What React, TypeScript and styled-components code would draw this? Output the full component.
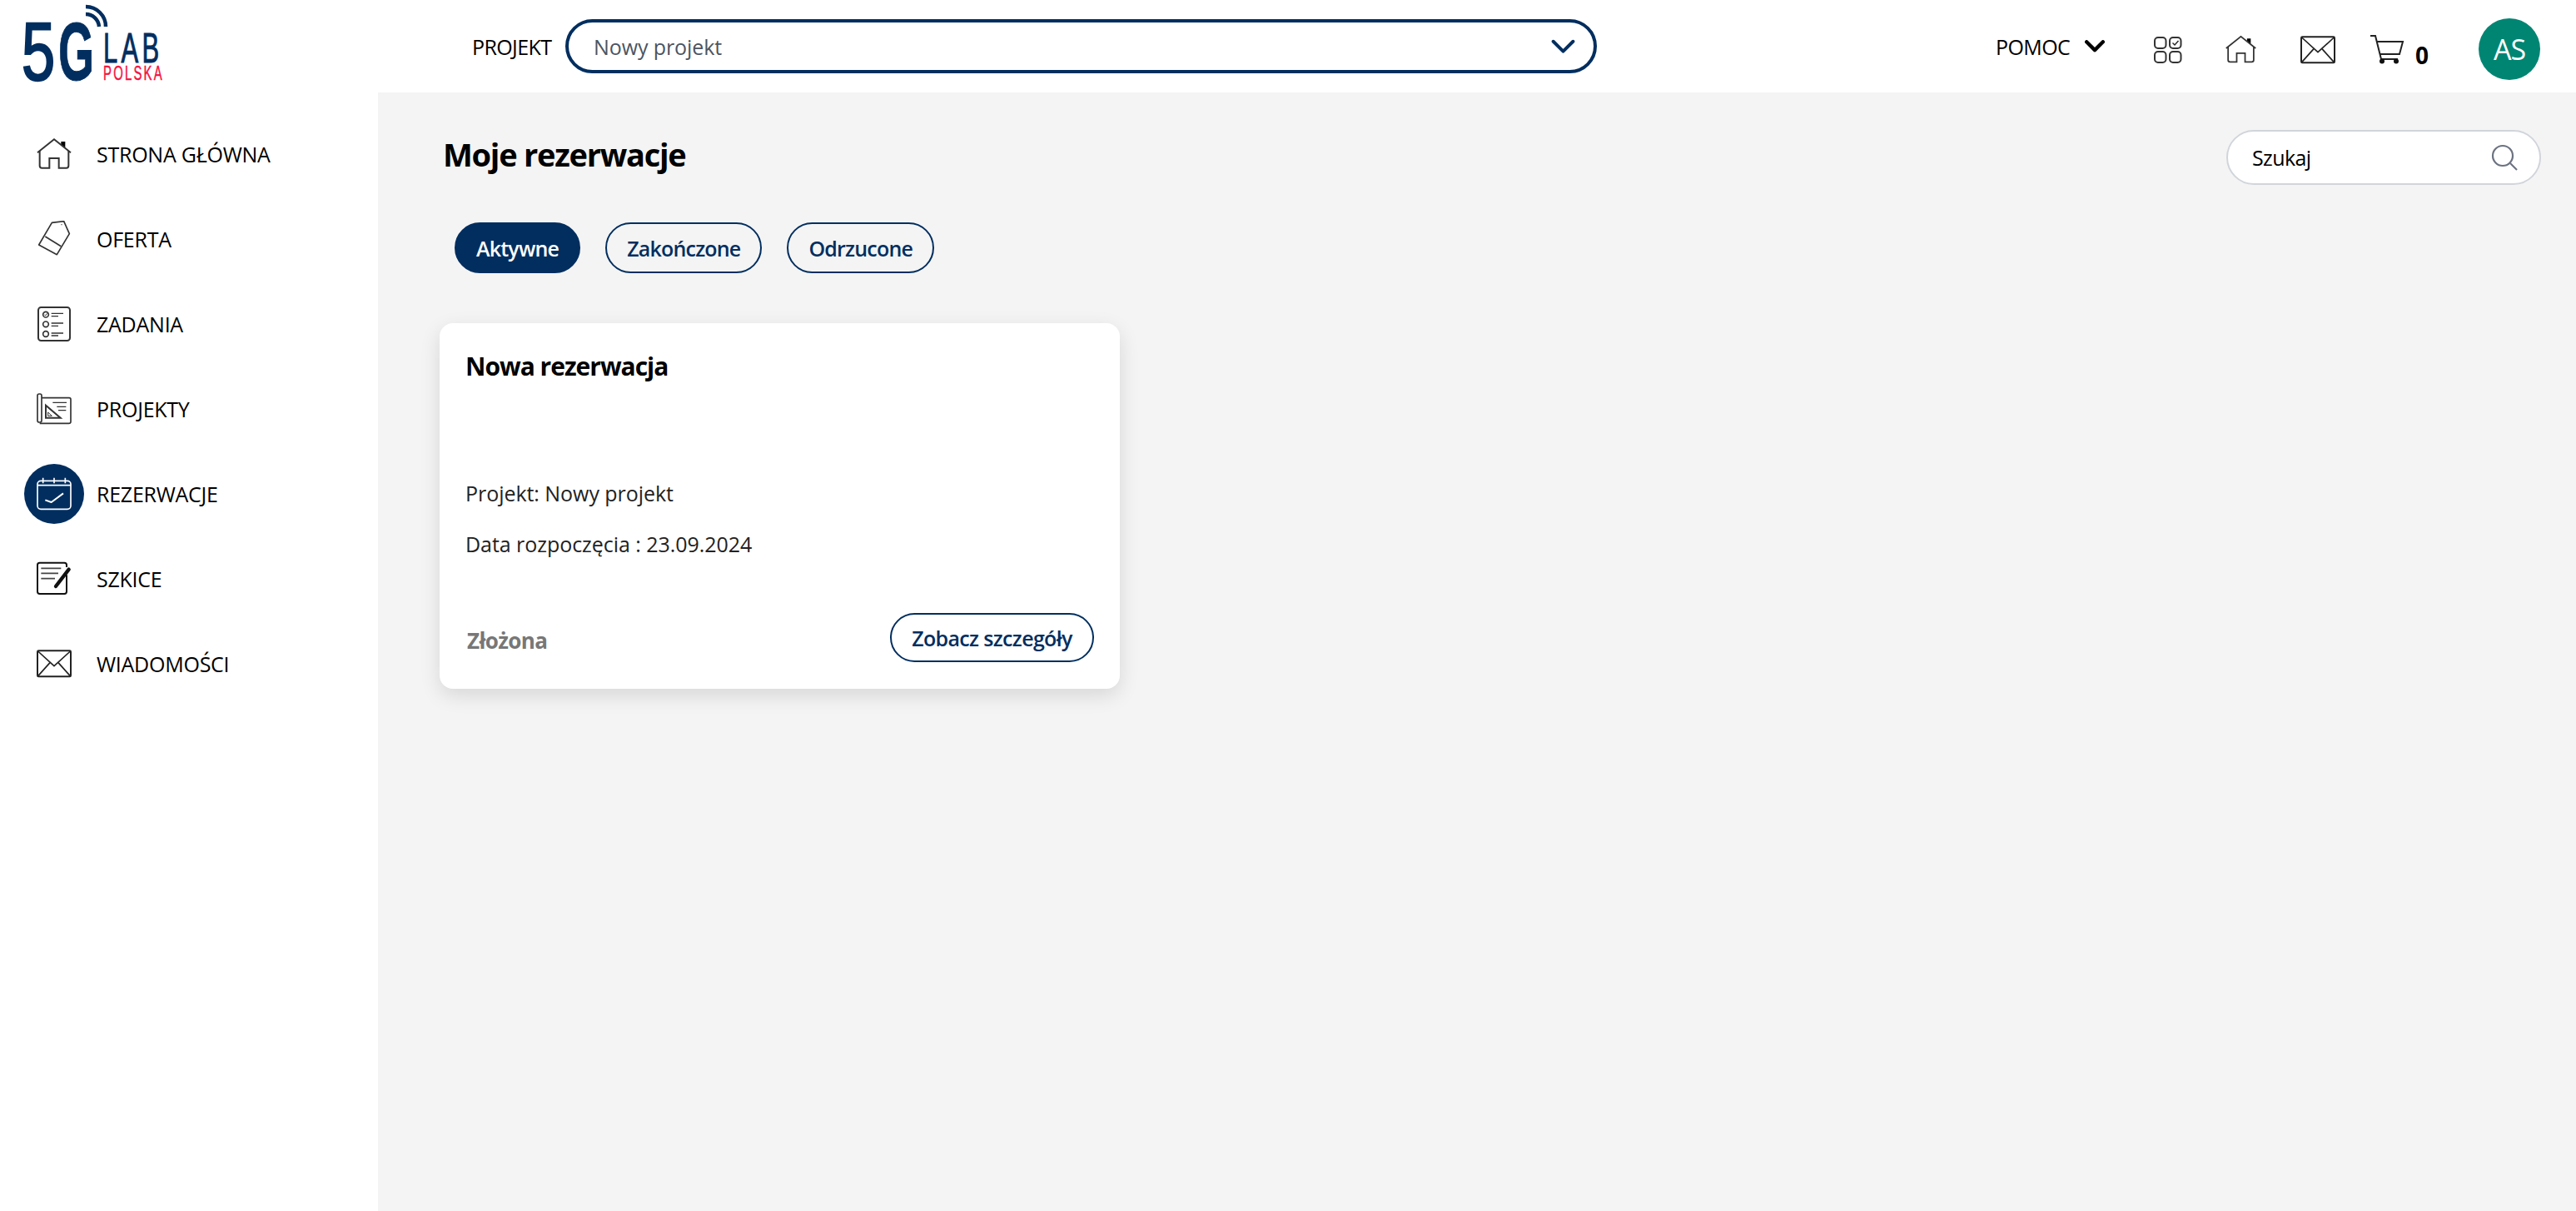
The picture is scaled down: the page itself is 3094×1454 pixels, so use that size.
import styled, { createGlobalStyle } from "styled-components";

const NAVY = "#012e5f";

const GlobalStyle = createGlobalStyle`
  html, body {
    margin: 0;
    padding: 0;
    background: #f4f4f4;
  }
  body {
    font-family: "Open Sans", "Noto Sans", sans-serif;
    color: #000;
  }
  * {
    box-sizing: border-box;
  }
`;

type IconProps = { size?: number; color?: string };

const HomeIcon = ({ size = 44, color = "#333" }: IconProps) => (
  <svg width={size} height={size} viewBox="-66 -66 132 132" fill="none" stroke={color} strokeWidth="6">
    <path d="M-60 -5 L0 -53 L60 -5" />
    <path d="M-52 -12 V42 a8 8 0 0 0 8 8 H-17 V15 H17 V50 H44 a8 8 0 0 0 8 -8 V-12" />
    <path d="M25 -45 H40 V-24 L25 -36 Z" fill="#000" stroke="none" />
  </svg>
);

const TagIcon = ({ size = 44, color = "#333" }: IconProps) => (
  <svg width={size} height={size} viewBox="-66 -66 132 132" fill="none" stroke={color} strokeWidth="5">
    <path d="M-8 -59 L35 -64 L55 -19 L10 56 L-55 21 Z" strokeLinejoin="round" />
    <path d="M-32 -9 L25 26" />
    <circle cx="27" cy="-52" r="2" fill={color} stroke="none" />
  </svg>
);

const TasksIcon = ({ size = 44, color = "#333" }: IconProps) => (
  <svg width={size} height={size} viewBox="-66 -66 132 132" fill="none" stroke={color} strokeWidth="6">
    <rect x="-57" y="-60" width="114" height="120" rx="10" />
    <circle cx="-30" cy="-34" r="10" strokeWidth="5" />
    <circle cx="-30" cy="1" r="10" strokeWidth="5" />
    <circle cx="-30" cy="36" r="10" strokeWidth="5" />
    <path d="M-10 -38 H33 M-10 -28 H15 M-10 -3 H33 M-10 7 H15 M-10 33 H33 M-10 42 H15" strokeWidth="4" />
    <path d="M-35 -34 L-31 -30 L-25 -38" strokeWidth="3" />
  </svg>
);

const ProjectsIcon = ({ size = 44, color = "#333" }: IconProps) => (
  <svg width={size} height={size} viewBox="-66 -66 132 132" fill="none" stroke={color} strokeWidth="5">
    <rect x="-60" y="-54" width="15" height="102" rx="6" />
    <path d="M-45 -40 H54 a6 6 0 0 1 6 6 V46 a6 6 0 0 1 -6 6 H-52" />
    <path d="M-30 -13 V32 H23 Z" strokeWidth="6" />
    <path d="M-22 12 V25 H-8 Z" strokeWidth="3" />
    <path d="M-5 -23 H45 M10 -8 H43 M15 5 H43" strokeWidth="4" />
  </svg>
);

const CalendarIcon = ({ size = 44, color = "#fff" }: IconProps) => (
  <svg width={size} height={size} viewBox="-66 -66 132 132" fill="none" stroke={color} strokeWidth="5">
    <rect x="-60" y="-47" width="120" height="102" rx="12" />
    <path d="M-40 -58 V-38 M0 -58 V-38 M40 -58 V-38 M-60 -31 H60" />
    <path d="M-32 22 L-10 30 L33 -2" strokeWidth="6" strokeLinejoin="round" />
  </svg>
);

const DraftIcon = ({ size = 44, color = "#111" }: IconProps) => (
  <svg width={size} height={size} viewBox="-66 -66 132 132" fill="none" stroke={color} strokeWidth="6">
    <path d="M45 -42 V-50 a8 8 0 0 0 -8 -8 H-52 a8 8 0 0 0 -8 8 V46 a8 8 0 0 0 8 8 H37 a8 8 0 0 0 8 -8 V-14" />
    <path d="M-47 -38 H25 M-47 -20 H15 M-47 -1 H3" stroke="#444" strokeWidth="5" />
    <path d="M6 27 L53 -34" strokeWidth="13" strokeLinecap="round" />
  </svg>
);

const MailIcon = ({ size = 44, color = "#222" }: IconProps) => (
  <svg width={size} height={size} viewBox="-66 -66 132 132" fill="none" stroke={color} strokeWidth="6">
    <rect x="-60" y="-47" width="120" height="93" rx="4" />
    <path d="M-58 -45 L0 8 L58 -45" strokeWidth="5" />
    <path d="M-58 44 L-15 -4 M58 44 L15 -4" strokeWidth="5" />
  </svg>
);

const GridCheckIcon = () => (
  <svg width="34" height="32" viewBox="0 0 34 32" fill="none" stroke="#333" strokeWidth="2">
    <rect x="1" y="1" width="13.5" height="13" rx="4" />
    <rect x="19" y="1" width="13.5" height="13" rx="4" />
    <rect x="1" y="18" width="13.5" height="13" rx="4" />
    <rect x="19" y="18" width="13.5" height="13" rx="4" />
    <path d="M22.5 7.5 L25 10 L29.5 5" stroke="#222" strokeWidth="1.4" />
  </svg>
);

const CartIcon = () => (
  <svg width="42" height="35" viewBox="0 0 42 35" fill="none" stroke="#222" strokeWidth="2">
    <path d="M1 1 H7 L14 29 H34" />
    <path d="M9 8 H40 L36 23 L12.6 23" />
    <circle cx="15" cy="31.5" r="3" fill="#111" stroke="none" />
    <circle cx="32" cy="31.5" r="3" fill="#111" stroke="none" />
  </svg>
);

const Chevron = ({ color, width, weight }: { color: string; width: number; weight: number }) => (
  <svg width={width} height={width * 0.6} viewBox="0 0 22 13" fill="none" stroke={color} strokeWidth={weight} strokeLinecap="round" strokeLinejoin="round">
    <path d="M2 2 L11 11 L20 2" />
  </svg>
);

const SearchIcon = () => (
  <svg width="32" height="32" viewBox="0 0 32 32" fill="none" stroke="#6b7280" strokeWidth="2.2">
    <circle cx="14" cy="14" r="12" />
    <path d="M23 23 L31 31" />
  </svg>
);

const Logo = () => (
  <LogoSvg width="170" height="100" viewBox="0 0 170 100" fill="none" fontFamily="Liberation Sans">
    <text transform="translate(-2 96) scale(0.73 1)" fontSize="99" fill={NAVY} stroke={NAVY} strokeWidth="2.5">5</text>
    <text transform="translate(42 96) scale(0.56 1)" fontSize="99" fontWeight="700" fill={NAVY} stroke={NAVY} strokeWidth="1">G</text>
    <path d="M75 8 A24 24 0 0 1 99 32" stroke={NAVY} strokeWidth="4.5" />
    <path d="M75 17 A16 16 0 0 1 91 32" stroke={NAVY} strokeWidth="4.5" />
    <text transform="translate(96 75) scale(0.62 1)" fontSize="50" letterSpacing="7" fill={NAVY} stroke={NAVY} strokeWidth="1">LAB</text>
    <text transform="translate(96 96) scale(0.62 1)" fontSize="24" letterSpacing="3.6" fill="#f5123f" stroke="#f5123f" strokeWidth="0.5">POLSKA</text>
  </LogoSvg>
);

const NAV_ITEMS = [
  { label: "STRONA GŁÓWNA", Icon: HomeIcon },
  { label: "OFERTA", Icon: TagIcon },
  { label: "ZADANIA", Icon: TasksIcon },
  { label: "PROJEKTY", Icon: ProjectsIcon },
  { label: "REZERWACJE", Icon: CalendarIcon, active: true },
  { label: "SZKICE", Icon: DraftIcon },
  { label: "WIADOMOŚCI", Icon: MailIcon },
];

const TABS = [
  { label: "Aktywne", active: true },
  { label: "Zakończone" },
  { label: "Odrzucone" },
];

const App = () => {
  return (
    <>
      <GlobalStyle />
      <Page>
        <Header>
          <LogoWrap>
            <Logo />
          </LogoWrap>
          <ProjectLabel>PROJEKT</ProjectLabel>
          <ProjectSelect>
            <SelectValue>Nowy projekt</SelectValue>
            <Chevron color={NAVY} width={29} weight={3} />
          </ProjectSelect>
          <HeaderRight>
            <HelpMenu>
              <HelpLabel>POMOC</HelpLabel>
              <Chevron color="#000" width={24} weight={4} />
            </HelpMenu>
            <HeaderIcons>
              <GridCheckIcon />
              <HomeIcon size={39} />
              <MailIcon size={44} />
              <CartBox>
                <CartIcon />
                <CartCount>0</CartCount>
              </CartBox>
            </HeaderIcons>
            <Avatar>AS</Avatar>
          </HeaderRight>
        </Header>
        <Body>
          <Sidebar>
            {NAV_ITEMS.map(({ label, Icon, active }) => (
              <NavRow key={label}>
                <IconDisc $active={active}>
                  <Icon />
                </IconDisc>
                <NavLabel>{label}</NavLabel>
              </NavRow>
            ))}
          </Sidebar>
          <Main>
            <TitleRow>
              <Title>Moje rezerwacje</Title>
              <SearchBox>
                <SearchText>Szukaj</SearchText>
                <SearchIcon />
              </SearchBox>
            </TitleRow>
            <Tabs>
              {TABS.map((tab) => (
                <Tab key={tab.label} $active={tab.active}>
                  {tab.label}
                </Tab>
              ))}
            </Tabs>
            <Card>
              <CardTitle>Nowa rezerwacja</CardTitle>
              <CardInfo>
                <CardLine>Projekt: Nowy projekt</CardLine>
                <CardLine>Data rozpoczęcia : 23.09.2024</CardLine>
              </CardInfo>
              <CardFooter>
                <Status>Złożona</Status>
                <DetailsButton>Zobacz szczegóły</DetailsButton>
              </CardFooter>
            </Card>
          </Main>
        </Body>
      </Page>
    </>
  );
};

export default App;

const Page = styled.div`
  width: 3094px;
  height: 1454px;
  display: flex;
  flex-direction: column;
  overflow: hidden;
`;

const Header = styled.header`
  height: 111px;
  background: #fff;
  display: flex;
  align-items: center;
  flex-shrink: 0;
`;

const LogoWrap = styled.div`
  width: 567px;
  padding: 0 0 0 28px;
  display: flex;
  margin-bottom: 11px;
`;

const LogoSvg = styled.svg`
  overflow: visible;
`;

const ProjectLabel = styled.span`
  width: 112px;
  font-size: 25px;
  letter-spacing: -0.6px;
`;

const ProjectSelect = styled.div`
  width: 1239px;
  height: 65px;
  border: 4px solid ${NAVY};
  border-radius: 33px;
  padding: 0 22px 0 30px;
  display: flex;
  align-items: center;
  justify-content: space-between;
`;

const SelectValue = styled.span`
  font-size: 25px;
  letter-spacing: -0.1px;
  color: #4b5563;
`;

const HeaderRight = styled.div`
  margin-left: 479px;
  display: flex;
  align-items: center;
`;

const HelpMenu = styled.div`
  display: flex;
  align-items: center;
  gap: 18px;
  width: 190px;
`;

const HelpLabel = styled.span`
  font-size: 25px;
  letter-spacing: -0.6px;
`;

const HeaderIcons = styled.div`
  margin-top: 8px;
  display: flex;
  align-items: center;
  gap: 51px;
`;

const CartBox = styled.div`
  margin-left: -11px;
  display: flex;
  align-items: flex-end;
  gap: 13px;
`;

const CartCount = styled.span`
  font-weight: 700;
  font-size: 28px;
  line-height: 22px;
  letter-spacing: 0;
`;

const Avatar = styled.div`
  width: 74px;
  height: 74px;
  margin: 7px 0 0 60px;
  border-radius: 50%;
  background: #008573;
  color: #fff;
  font-size: 34px;
  display: flex;
  align-items: center;
  justify-content: center;
  letter-spacing: -1px;
`;

const Body = styled.div`
  flex: 1;
  display: flex;
  min-height: 0;
`;

const Sidebar = styled.nav`
  width: 454px;
  background: #fff;
  padding: 38px 0 0 29px;
  display: flex;
  flex-direction: column;
  gap: 30px;
  flex-shrink: 0;
`;

const NavRow = styled.div`
  height: 72px;
  display: flex;
  align-items: center;
  gap: 15px;
`;

const IconDisc = styled.span<{ $active?: boolean }>`
  width: 72px;
  height: 72px;
  border-radius: 50%;
  background: ${(p) => (p.$active ? NAVY : "transparent")};
  display: flex;
  align-items: center;
  justify-content: center;
`;

const NavLabel = styled.span`
  font-size: 25px;
  letter-spacing: -0.25px;
`;

const Main = styled.main`
  flex: 1;
  padding: 45px 42px 0 74px;
  background: #f4f4f4;
`;

const TitleRow = styled.div`
  height: 66px;
  display: flex;
  align-items: center;
  justify-content: space-between;
`;

const Title = styled.h1`
  margin: 0 0 8px 4px;
  font-size: 38px;
  font-weight: 700;
  letter-spacing: -1.25px;
`;

const SearchBox = styled.div`
  width: 378px;
  height: 66px;
  border: 2px solid #d1d5db;
  border-radius: 33px;
  background: #fff;
  padding: 0 26px 0 29px;
  display: flex;
  align-items: center;
  justify-content: space-between;
`;

const SearchText = styled.span`
  font-size: 25px;
  letter-spacing: -0.6px;
`;

const Tabs = styled.div`
  margin: 45px 0 0 18px;
  display: flex;
  gap: 30px;
`;

const Tab = styled.div<{ $active?: boolean }>`
  height: 61px;
  padding: 0 24px;
  border: 2px solid ${NAVY};
  border-radius: 31px;
  background: ${(p) => (p.$active ? NAVY : "transparent")};
  color: ${(p) => (p.$active ? "#fff" : NAVY)};
  font-size: 25px;
  font-weight: 600;
  letter-spacing: -0.8px;
  display: flex;
  align-items: center;
`;

const Card = styled.section`
  width: 817px;
  height: 439px;
  margin-top: 60px;
  padding: 31px 31px 32px;
  background: #fff;
  border-radius: 16px;
  box-shadow: 0 8px 24px rgba(0, 0, 0, 0.12);
  display: flex;
  flex-direction: column;
`;

const CardTitle = styled.h2`
  margin: 0;
  font-size: 30px;
  font-weight: 700;
  letter-spacing: -1px;
`;

const CardInfo = styled.div`
  margin-top: 115px;
  display: flex;
  flex-direction: column;
  gap: 27px;
`;

const CardLine = styled.p`
  margin: 0;
  font-size: 25px;
  letter-spacing: -0.05px;
  color: #222;
`;

const CardFooter = styled.div`
  margin-top: auto;
  display: flex;
  align-items: center;
  justify-content: space-between;
`;

const Status = styled.span`
  margin: 6px 0 0 2px;
  font-size: 26px;
  font-weight: 700;
  letter-spacing: -0.6px;
  color: #777;
`;

const DetailsButton = styled.div`
  width: 245px;
  height: 59px;
  border: 2px solid ${NAVY};
  border-radius: 30px;
  color: ${NAVY};
  font-size: 25px;
  font-weight: 600;
  letter-spacing: -0.65px;
  display: flex;
  align-items: center;
  justify-content: center;
`;
